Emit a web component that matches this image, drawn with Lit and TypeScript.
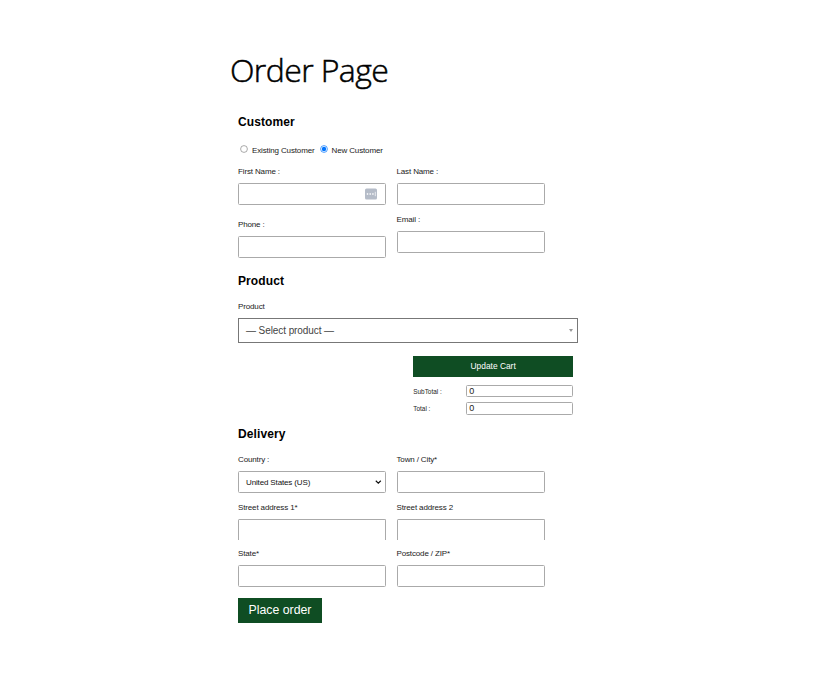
import { LitElement, html, css } from "lit";
import { customElement, property } from "lit/decorators.js";

@customElement("form-field")
class FormField extends LitElement {
  @property() label = "";
  @property() kind = "text";

  static styles = css`
    :host { display: block; width: 148px; }
    .label { height: 12px; line-height: 13px; font-size: 8px; letter-spacing: -.14px; margin-bottom: 6px; white-space: nowrap; color: #222; }
    .box {
      box-sizing: border-box; height: 22px; border: 1px solid #aaa; border-radius: 1.5px;
      display: flex; align-items: center; justify-content: space-between;
      padding: 0 3px 0 7px; font-size: 8px; letter-spacing: -.14px; color: #111; background: #fff;
    }
    .clipped { border-bottom: 0; height: 21px; border-radius: 1.5px 1.5px 0 0; }
    .badge { margin-left: auto; margin-right: 5px; }
    svg { display: block; }
  `;

  render() {
    return html`
      <div class="label">${this.label}</div>
      <div class="box ${this.kind === "clipped" ? "clipped" : ""}">
        ${this.kind === "select"
          ? html`<span>United States (US)</span>
              <svg width="7" height="6" viewBox="0 0 7 6"><path d="M.8 1.8 3.3 4.1 5.8 1.8" fill="none" stroke="#111" stroke-width="1.2"/></svg>`
          : ""}
        ${this.kind === "badge"
          ? html`<svg class="badge" width="12" height="12" viewBox="0 0 12 12">
              <rect x="0" y=".5" width="12" height="11" rx="1.5" fill="#b5bcc8"/>
              <path d="M1.8 6h1.4M4.5 6h1.4M7.2 6h1.4" stroke="#fff" stroke-width="1.3"/>
              <path d="M10.3 3.8v4.4" stroke="#fff" stroke-width=".7"/></svg>`
          : ""}
      </div>
    `;
  }
}

@customElement("app-root")
class AppRoot extends LitElement {
  static styles = css`
    :host {
      display: block; box-sizing: border-box; width: 823px; height: 692px; overflow: hidden;
      background: #fff; color: #222; font-family: "Liberation Sans", Arial, sans-serif; font-size: 8px; letter-spacing: -.14px;
      padding: 49px 0 0 230px;
    }
    h1 { margin: 0; height: 43px; font: 300 32px/42px "Open Sans", "Noto Sans", sans-serif; letter-spacing: -.6px; -webkit-text-stroke: .5px #000; color: #000; white-space: nowrap; }
    form { margin-left: 8px; width: 341px; }
    h2 { margin: 0; height: 16px; font-size: 12px; line-height: 16px; letter-spacing: .1px; color: #000; }
    .customer { padding-top: 22px; }
    .radios { display: flex; align-items: center; height: 12px; margin: 14px 0 0 2px; padding-bottom: 9px; white-space: nowrap; }
    .radio { display: block; margin-right: 4px; position: relative; top: -1px; }
    .second { margin-left: 5px; }
    .cols { display: flex; gap: 10.5px; }
    .col { display: flex; flex-direction: column; gap: 7.5px; }
    .col.loose { gap: 13px; }
    .product { padding-top: 15px; }
    .caption { height: 12px; line-height: 12px; margin: 11.5px 0 5.4px; }
    .picker {
      box-sizing: border-box; height: 25px; width: 340px; border: 1px solid #777; color: #444;
      display: flex; align-items: center; justify-content: space-between; padding: 0 4px 0 7px; font-size: 10px; letter-spacing: -.08px;
    }
    .cart { width: 159.7px; margin: 13.5px 0 0 175.3px; }
    .update { background: #0f4d23; color: #fff; height: 20.5px; line-height: 20.5px; text-align: center; font-size: 8.4px; letter-spacing: 0; margin-bottom: 8px; }
    .total { display: flex; align-items: center; height: 12.5px; margin-bottom: 5px; font-size: 6.4px; letter-spacing: 0; }
    .total span { width: 53px; }
    .amount { box-sizing: border-box; flex: 1; height: 12.5px; border: 1px solid #aaa; border-radius: 1.5px; padding-left: 2px; font-size: 9px; line-height: 11px; }
    .delivery { margin-top: 11px; }
    .delivery .cols { margin-top: 11.3px; }
    .place { width: 84px; height: 25px; line-height: 25px; margin-top: 10.6px; background: #0f4d23; color: #fff; text-align: center; font-size: 12.3px; letter-spacing: 0; }
  `;

  private radio(on: boolean) {
    return html`<svg class="radio" width="8" height="8" viewBox="0 0 8 8">
      <circle cx="4" cy="4" r="3.4" fill="#fff" stroke=${on ? "#0075ff" : "#858585"} stroke-width=".7"/>
      <circle cx="4" cy="4" r="2.2" fill=${on ? "#0075ff" : "#fff"}/>
    </svg>`;
  }

  render() {
    return html`
      <h1>Order Page</h1>
      <form>
        <section class="customer">
          <h2>Customer</h2>
          <div class="radios">
            ${this.radio(false)}<span>Existing Customer</span>
            <span class="second"></span>${this.radio(true)}<span>New Customer</span>
          </div>
          <div class="cols">
            <div class="col loose">
              <form-field label="First Name :" kind="badge"></form-field>
              <form-field label="Phone :"></form-field>
            </div>
            <div class="col">
              <form-field label="Last Name :"></form-field>
              <form-field label="Email :"></form-field>
            </div>
          </div>
        </section>
        <section class="product">
          <h2>Product</h2>
          <div class="caption">Product</div>
          <div class="picker">
            <span>— Select product —</span>
            <svg width="4" height="3" viewBox="0 0 4 3"><path d="M0 0h4L2 3z" fill="#999"/></svg>
          </div>
          <div class="cart">
            <div class="update">Update Cart</div>
            <div class="total"><span>SubTotal :</span><div class="amount">0</div></div>
            <div class="total"><span>Total :</span><div class="amount">0</div></div>
          </div>
        </section>
        <section class="delivery">
          <h2>Delivery</h2>
          <div class="cols">
            <div class="col">
              <form-field label="Country :" kind="select"></form-field>
              <form-field label="Street address 1*" kind="clipped"></form-field>
              <form-field label="State*"></form-field>
            </div>
            <div class="col">
              <form-field label="Town / City*"></form-field>
              <form-field label="Street address 2" kind="clipped"></form-field>
              <form-field label="Postcode / ZIP*"></form-field>
            </div>
          </div>
        </section>
        <div class="place">Place order</div>
      </form>
    `;
  }
}
